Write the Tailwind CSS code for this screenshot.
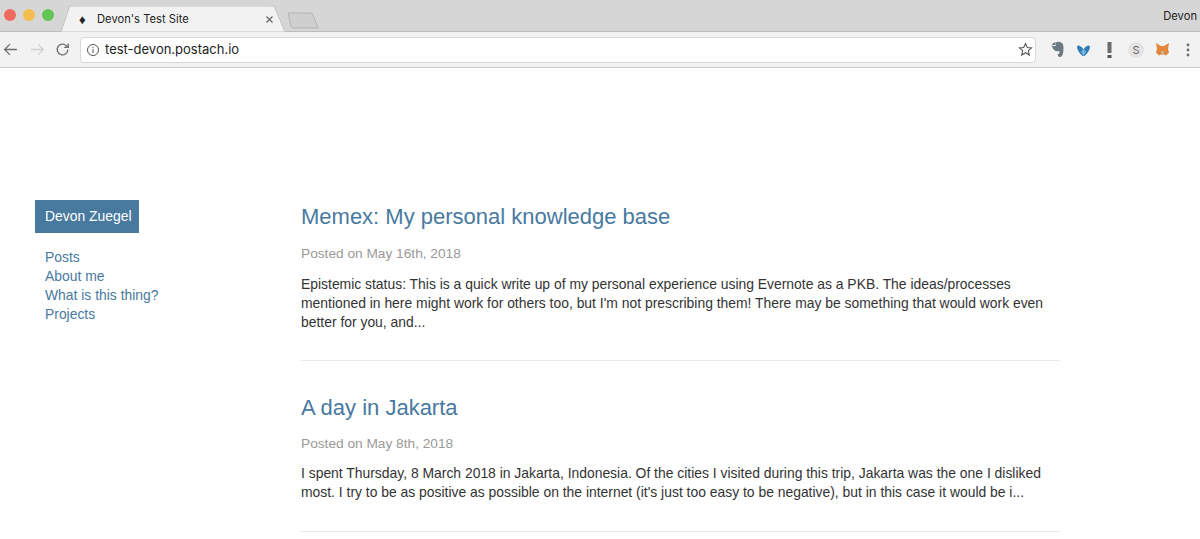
<!DOCTYPE html>
<html lang="en">
<head>
<meta charset="UTF-8">
<title>Devon's Test Site</title>
<script src="https://cdn.jsdelivr.net/npm/@tailwindcss/browser@4"></script>
</head>
<body class="bg-white h-[539px] overflow-hidden font-['Liberation_Sans',sans-serif]">

<!-- browser chrome -->
<div class="h-[68px] border-b border-[#c8c8c8] bg-[#f2f2f2] font-['Inter',sans-serif]">
  <div class="h-[32px] flex items-end bg-[#d6d6d6] border-b border-[#bcbcbc] relative">
    <div class="flex gap-[7px] pl-[4px] pb-[10px] w-[62px]">
      <span class="w-[12px] h-[12px] rounded-full bg-[#ee6a5f]"></span>
      <span class="w-[12px] h-[12px] rounded-full bg-[#f5bd4f]"></span>
      <span class="w-[12px] h-[12px] rounded-full bg-[#61c454]"></span>
    </div>
    <svg class="w-[226px] h-[26px] -ml-[1px] -mb-[1px]" viewBox="0 0 226 26"><path d="M0 26 L8 2 Q9 0 12 0 L210 0 Q213 0 214 2 L224 26 Z" fill="#f2f2f2" stroke="#c4c4c4"/></svg>
    <div class="absolute left-[79px] top-[12px] flex items-center w-[195px] text-[11.2px] leading-[14px] text-[#222]">
      <span class="w-[18px] text-[13px]">♦</span><span>Devon's Test Site</span>
      <svg class="w-[9px] h-[9px] ml-auto" viewBox="0 0 9 9"><path d="M1.500 1.500l6 6M7.500 1.500l-6 6" stroke="#666" stroke-width="1.2"/></svg>
    </div>
    <svg class="w-[34px] h-[17px] ml-[-1px] mb-[2px]" viewBox="0 0 34 17"><path d="M2 1 L24 1 Q26 1 27 3 L32 16 L8 16 Q6 16 5 14 Z" fill="#cfcfcf" stroke="#b4b4b4"/></svg>
    <span class="absolute right-[3px] top-[9px] text-[11.2px] leading-[14px] text-[#222]">Devon</span>
  </div>
  <div class="h-[35px] flex items-center">
    <div class="w-[80px] flex items-center pl-[3px]">
      <svg class="w-[15px] h-[15px]" viewBox="0 0 14 14" fill="none" stroke="#6e6e6e" stroke-width="1.2"><path d="M13 7H1.500M6.500 2 1.500 7l5 5"/></svg>
      <svg class="w-[15px] h-[15px] ml-[12px]" viewBox="0 0 14 14" fill="none" stroke="#d0d0d0" stroke-width="1.2"><path d="M1 7h11.500M7.500 2l5 5-5 5"/></svg>
      <svg class="w-[15px] h-[15px] ml-[10px]" viewBox="0 0 14 14" fill="none" stroke="#6e6e6e" stroke-width="1.300"><path d="M12 7a5 5 0 1 1-1.500-3.600L12 5"/><path d="M12.300 1.300V5H8.600"/></svg>
    </div>
    <div class="w-[956px] h-[26px] bg-white border border-[#d8d8d8] rounded-[4px] flex items-center pl-[5px] pr-[2px] text-[13px] text-[#222]">
      <svg class="w-[14px] h-[14px] mr-[5px]" viewBox="0 0 14 14" fill="none" stroke="#555" stroke-width="1"><circle cx="7" cy="7" r="5.500"/><path d="M7 6.200V10M7 4v1.200"/></svg>
      <span>test-devon.postach.io</span>
      <svg class="w-[15px] h-[15px] ml-auto" viewBox="0 0 15 15" fill="none" stroke="#555" stroke-width="1.100"><path d="M7.500 1.500l1.800 4 4.200.4-3.200 2.800 1 4.300-3.800-2.300-3.800 2.300 1-4.300L1.500 5.900l4.200-.4z"/></svg>
    </div>
    <div class="flex-1 flex items-center pl-[13px] gap-[11px]">
      <svg class="w-[16px] h-[17px]" viewBox="0 0 16 17"><path d="M2 4.500 5 1.500h1.500V4H3.800zM6.800 1.500Q8.500.5 11 1q3.500.8 3.500 5.500 0 4.500-.8 7-.8 2.500-3 2.500-2 0-2-2 0-1.500 1.800-1.500l-.3-2.500q-3 .5-4.500-.5-2-1.500-3-4.500H6.800z" fill="#6d7980"/></svg>
      <svg class="w-[15px] h-[15px]" viewBox="0 0 15 15"><path d="M1 5.500Q1 3 3 3.500 6 4.500 7.500 7.500 9 4.500 12 3.500 14 3 14 5.500 13 10 8.500 14h-2Q2 10 1 5.500z" fill="#2f7db8"/><path d="M7.500 7.500 5 9.500l2.500 4.500 2.500-4.500z" fill="#7fb3d8"/></svg>
      <svg class="w-[15px] h-[16px]" viewBox="0 0 15 16"><path d="M5.500 0h4v11h-4z" fill="#6b6b6b"/><path d="M5.500 13h4v3h-4z" fill="#555"/></svg>
      <span class="w-[16px] h-[16px] rounded-full bg-[#e3e3e3] text-[11px] leading-[16px] text-center text-[#666]">S</span>
      <svg class="w-[15px] h-[15px]" viewBox="0 0 15 15"><path d="M1 1l5 3h3l5-3-1 6 1 3.500-3 3-2-1H6l-2 1-3-3L2 7z" fill="#e2883a"/><path d="M6 9h3l-.5 3.500h-2z" fill="#c9b89a"/></svg>
      <svg class="w-[4px] h-[14px] ml-[5px]" viewBox="0 0 4 14" fill="#6e6e6e"><circle cx="2" cy="2" r="1.400"/><circle cx="2" cy="7" r="1.400"/><circle cx="2" cy="12" r="1.400"/></svg>
    </div>
  </div>
</div>

<!-- page -->
<div class="flex pt-[132px] pl-[35px]">
  <aside class="w-[266px] shrink-0">
    <div class="w-[104px] h-[33px] bg-[#48799f] text-white text-[13.9px] leading-[33px] pl-[10px]">Devon Zuegel</div>
    <nav class="mt-[15px] pl-[10px] flex flex-col text-[13.9px] leading-[19px] text-[#48799f]">
      <a>Posts</a>
      <a>About me</a>
      <a>What is this thing?</a>
      <a>Projects</a>
    </nav>
  </aside>
  <main class="w-[759px]">
    <article class="border-b border-[#eaeaea] h-[161px]">
      <h2 class="text-[22px] leading-[34px] text-[#48799f]">Memex: My personal knowledge base</h2>
      <p class="mt-[10px] text-[13.7px] leading-[20px] text-[#999]">Posted on May 16th, 2018</p>
      <p class="mt-[11px] text-[13.9px] leading-[19px] text-[#333]">Epistemic status: This is a quick write up of my personal experience using Evernote as a PKB. The ideas/processes mentioned in here might work for others too, but I'm not prescribing them! There may be something that would work even better for you, and...</p>
    </article>
    <article class="border-b border-[#eaeaea] pt-[30px] h-[171px]">
      <h2 class="text-[22px] leading-[34px] text-[#48799f]">A day in Jakarta</h2>
      <p class="mt-[9px] text-[13.7px] leading-[20px] text-[#999]">Posted on May 8th, 2018</p>
      <p class="mt-[10px] text-[13.9px] leading-[19px] text-[#333]">I spent Thursday, 8 March 2018 in Jakarta, Indonesia. Of the cities I visited during this trip, Jakarta was the one I disliked most. I try to be as positive as possible on the internet (it's just too easy to be negative), but in this case it would be i...</p>
    </article>
  </main>
</div>
</body>
</html>
